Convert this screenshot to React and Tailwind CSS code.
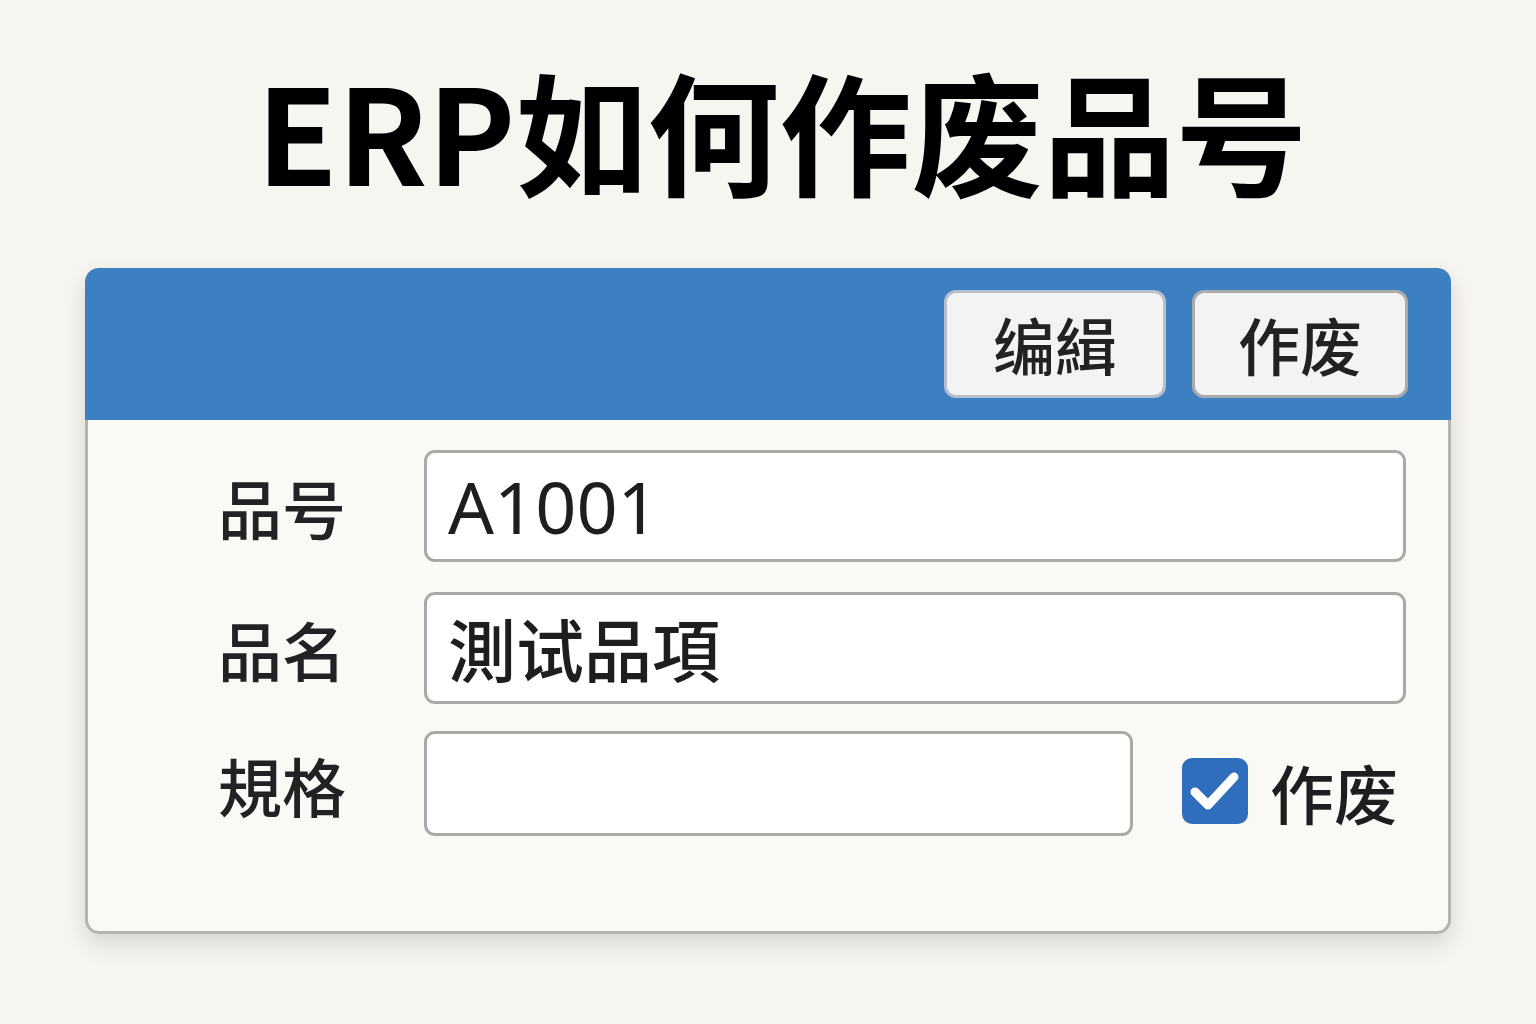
import React from 'react';

const cjk = { fontFamily: '"Noto Sans CJK SC", "Noto Sans", sans-serif' };

const Field = ({ label, children }) => (
  <div className="flex items-center">
    <div className="w-[336px] pl-[130px] text-[64px] font-medium leading-none text-[#222]">
      {label}
    </div>
    <div className="flex h-[112px] flex-1 items-center rounded-[11px] border-[3px] border-[#a9a9a7] bg-white pl-[21px] text-[#1e1e1e]">
      {children}
    </div>
  </div>
);

const App = () => {
  return (
    <div className="min-h-[1024px] w-full bg-[#f6f5f0]" style={cjk}>
      <h1 className="pl-[28px] pt-[63px] text-center text-[132px] font-bold leading-none text-black">
        ERP如何作废品号
      </h1>

      <div className="mx-auto mt-[73px] w-[1366px] rounded-[14px] shadow-[0_10px_24px_rgba(0,0,0,0.13)]">
        <div className="flex h-[152px] items-center justify-end gap-[26px] rounded-t-[14px] bg-[#3d80c1] pr-[43px]">
          <button className="h-[108px] w-[222px] rounded-[12px] border-[3px] border-[#b7bfca] bg-[#f3f3f3] text-[62px] font-medium leading-none text-[#222]">
            编緝
          </button>
          <button className="h-[108px] w-[216px] rounded-[12px] border-[3px] border-[#a9aaac] bg-[#f3f3f3] text-[62px] font-medium leading-none text-[#222]">
            作废
          </button>
        </div>

        <div className="flex flex-col gap-[30px] rounded-b-[14px] border-[3px] border-t-0 border-[#b3b3b0] bg-[#faf9f5] pb-[95px] pr-[42px] pt-[30px]">
          <Field label="品号">
            <span
              className="text-[72px] leading-none"
              style={{ fontFamily: '"Noto Sans", "Open Sans", sans-serif' }}
            >
              A1001
            </span>
          </Field>
          <Field label="品名">
            <span className="text-[68px] font-medium leading-none">測试品項</span>
          </Field>
          <div className="-mt-[3px] flex items-center">
            <div className="w-[336px] pl-[130px] text-[64px] font-medium leading-none text-[#222]">
              規格
            </div>
            <div className="h-[105px] w-[709px] rounded-[11px] border-[3px] border-[#a9a9a7] bg-white" />
            <div className="ml-[49px] mt-[14px] flex items-center gap-[22px]">
              <div className="h-[66px] w-[66px] rounded-[10px] bg-[#2f6ebd]">
                <svg width="66" height="66" viewBox="0 0 66 66" fill="none">
                  <path
                    d="M13 34L26 47L52 19"
                    stroke="white"
                    strokeWidth="9"
                    strokeLinecap="round"
                    strokeLinejoin="round"
                  />
                </svg>
              </div>
              <span className="text-[64px] font-medium leading-none text-[#1e1e1e]">作废</span>
            </div>
          </div>
        </div>
      </div>
    </div>
  );
};

export default App;
